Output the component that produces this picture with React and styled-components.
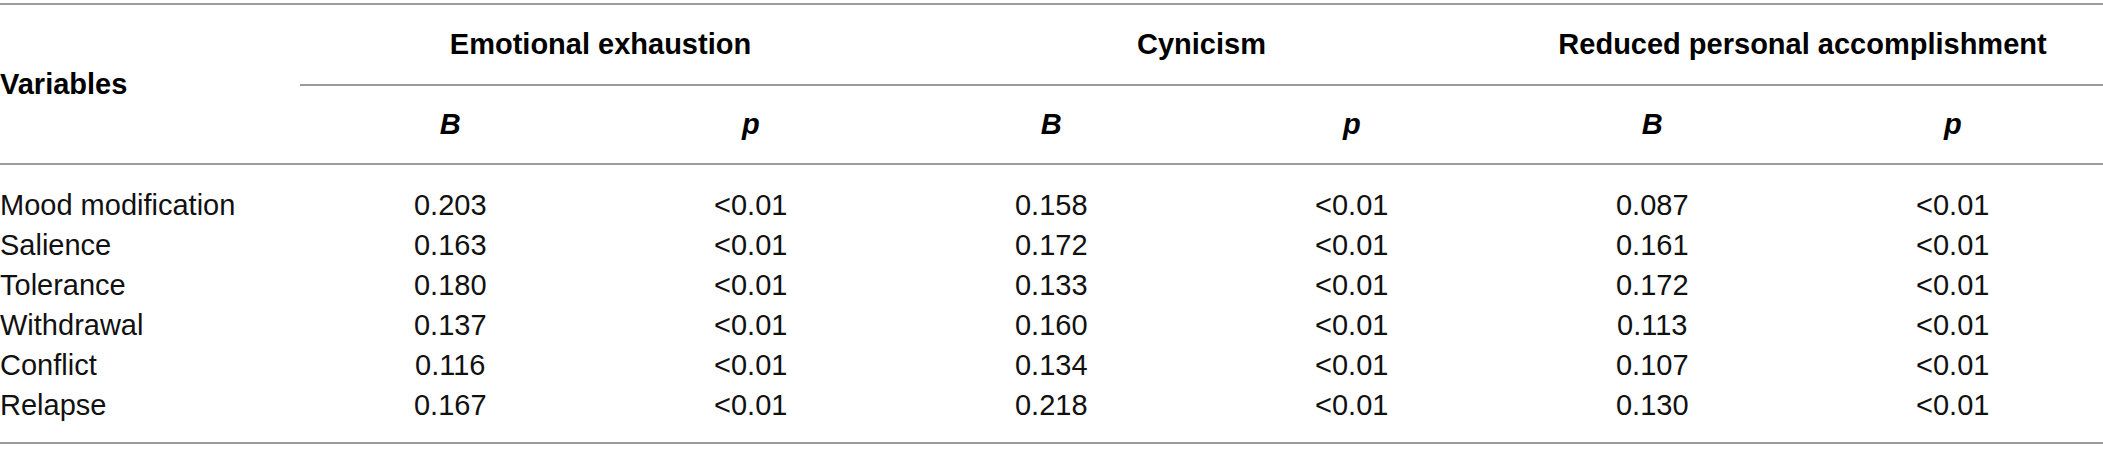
import React from 'react'
import styled, { createGlobalStyle } from 'styled-components'

const GlobalStyle = createGlobalStyle`
  html, body {
    margin: 0;
    padding: 0;
    background: #ffffff;
  }
  body {
    font-family: 'Liberation Sans', Arial, Helvetica, sans-serif;
    color: #111111;
  }
`

const rule = '2px solid #9c9c9c'

const Table = styled.div`
  width: 2103px;
  margin-top: 3px;
  border-top: ${rule};
  border-bottom: ${rule};
`

const Grid = styled.div`
  display: grid;
  grid-template-columns: 300px repeat(6, 1fr);
`

const Head = styled(Grid)`
  border-bottom: ${rule};
`

const Body = styled.div`
  padding: 20px 0 17px;
`

const Row = styled(Grid)`
  height: 40px;
  align-items: center;
`

const VarHead = styled.div`
  grid-row: span 2;
  display: flex;
  align-items: center;
  font-size: 29px;
  font-weight: 700;
  color: #000;
`

const GroupHead = styled.div`
  grid-column: span 2;
  box-sizing: border-box;
  height: 81px;
  border-bottom: ${rule};
  display: flex;
  align-items: center;
  justify-content: center;
  font-size: 29px;
  font-weight: 700;
  color: #000;
`

const SubHead = styled.div`
  height: 77px;
  display: flex;
  align-items: center;
  justify-content: center;
  font-size: 29px;
  font-weight: 700;
  font-style: italic;
  color: #000;
`

const Cell = styled.div`
  font-size: 29px;
  line-height: 40px;
  text-align: ${props => (props.left ? 'left' : 'center')};
  white-space: nowrap;
`

const groups = ['Emotional exhaustion', 'Cynicism', 'Reduced personal accomplishment']

const rows = [
  ['Mood modification', '0.203', '0.158', '0.087'],
  ['Salience', '0.163', '0.172', '0.161'],
  ['Tolerance', '0.180', '0.133', '0.172'],
  ['Withdrawal', '0.137', '0.160', '0.113'],
  ['Conflict', '0.116', '0.134', '0.107'],
  ['Relapse', '0.167', '0.218', '0.130'],
]

const App = () => (
  <>
    <GlobalStyle />
    <Table>
      <Head>
        <VarHead>Variables</VarHead>
        {groups.map(g => (
          <GroupHead key={g}>{g}</GroupHead>
        ))}
        {groups.map(g => (
          <React.Fragment key={g}>
            <SubHead>B</SubHead>
            <SubHead>p</SubHead>
          </React.Fragment>
        ))}
      </Head>
      <Body>
        {rows.map(([name, ...values]) => (
          <Row key={name}>
            <Cell left>{name}</Cell>
            {values.map((v, i) => (
              <React.Fragment key={i}>
                <Cell>{v}</Cell>
                <Cell>&lt;0.01</Cell>
              </React.Fragment>
            ))}
          </Row>
        ))}
      </Body>
    </Table>
  </>
)

export default App
